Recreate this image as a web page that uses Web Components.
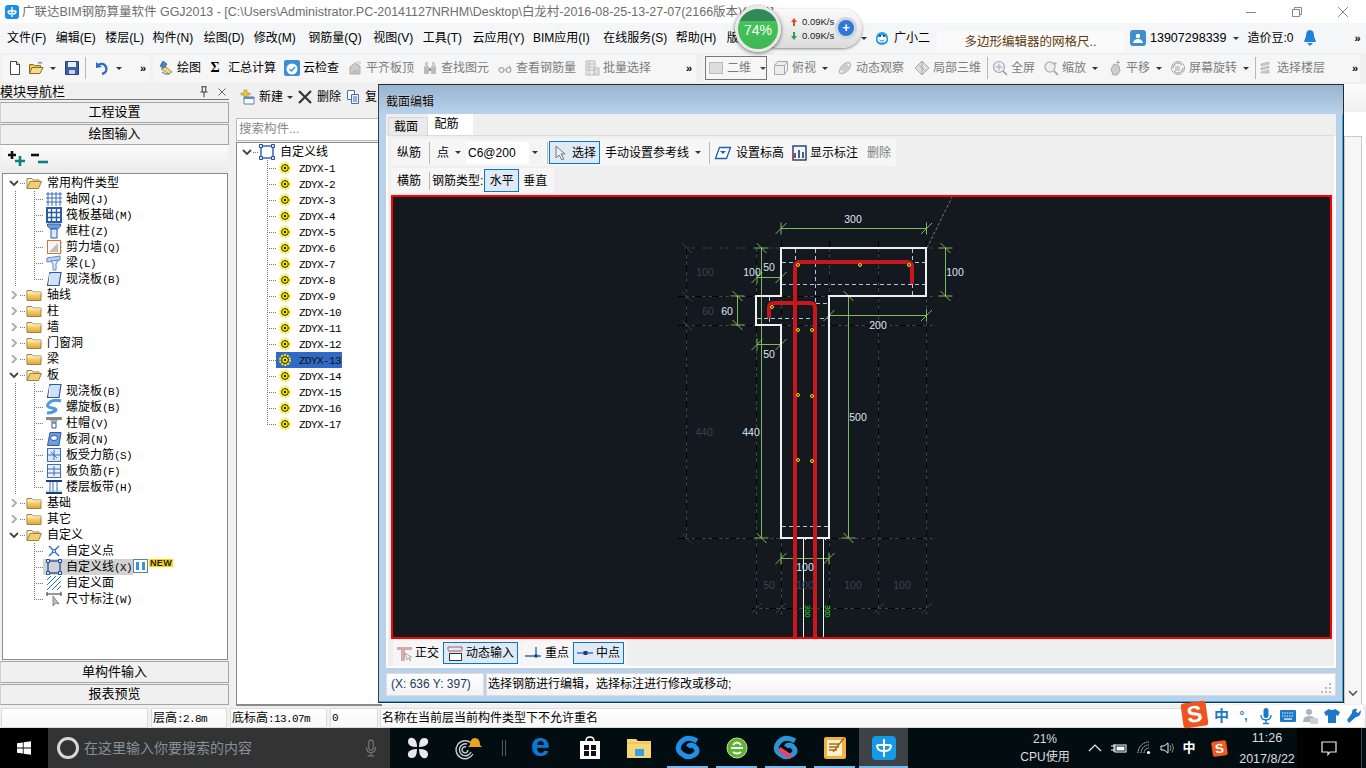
<!DOCTYPE html>
<html lang="zh">
<head>
<meta charset="utf-8">
<title>GGJ2013</title>
<style>
  html, body { margin: 0; height: 100%; }
  body {
    width: 1366px; height: 768px; overflow: hidden; display: flex; flex-direction: column;
    background: #f0f0f0; color: #000; position: relative;
    font: 12px/16px "Liberation Sans", "Noto Sans CJK SC", sans-serif;
  }
</style>
</head>
<body>
<title-bar></title-bar>
<menu-bar></menu-bar>
<main-toolbar></main-toolbar>
<work-area>
  <nav-panel></nav-panel>
  <comp-panel></comp-panel>
  <draw-area></draw-area>
</work-area>
<status-bar></status-bar>
<task-bar></task-bar>
<section-dialog></section-dialog>
<net-widget></net-widget>
<ime-bar></ime-bar>

<script>
// icon set, 16x16 unless noted
const I = {
  new: '<path d="M3.5 1.5h6l3 3v10h-9z" fill="#fff" stroke="#444"/><path d="M9.5 1.5v3h3" fill="#ddd" stroke="#444"/>',
  open: '<path d="M1.5 13.5v-9h4l1 1h6v2" fill="#e8c766" stroke="#8a6d20"/><path d="M1.5 13.5l2.5-6h11l-3 6z" fill="#f6dc8a" stroke="#8a6d20"/><path d="M10 3.5q2-2.5 4 0" fill="none" stroke="#2a62b8"/>',
  save: '<path d="M1.5 1.5h13v13h-13z" fill="#3d5fa8" stroke="#26407a"/><path d="M4 2h8v5H4z" fill="#e8eef8"/><path d="M5 10h6v4H5z" fill="#c7d3e8"/>',
  undo: '<path d="M4 5q6-3 8 2t-4 7" fill="none" stroke="#2a6fc4" stroke-width="2.4"/><path d="M2 2v6l6-1z" fill="#2a6fc4"/>',
  draw: '<path d="M5 1l4 3-3 5-4-3z" fill="#4f7fc9" stroke="#244a86" stroke-width=".6"/><path d="M3 9l8 5 3-2-6-5z" fill="#f1d77c" stroke="#8a6d20" stroke-width=".7"/><path d="M4 12q3 3 7 2" fill="none" stroke="#2a6fc4"/>',
  cloud: '<rect x="0" y="0" width="16" height="16" rx="2" fill="#3a8fd8"/><circle cx="8" cy="9" r="5.5" fill="#fff"/><path d="M5.5 9l2 2 3.5-4" fill="none" stroke="#3a8fd8" stroke-width="1.5"/>',
  align: '<path d="M3 14V7l5-4 5 3v8z" fill="#ccc" stroke="#aaa"/><path d="M6 14v-4h5v4" fill="#bbb"/><path d="M9 1h5v3H9z" fill="#ddd"/>',
  find: '<rect x="2" y="6" width="5" height="8" rx="1" fill="#bbb"/><rect x="9" y="6" width="5" height="8" rx="1" fill="#bbb"/><rect x="3" y="2" width="3" height="5" fill="#ccc"/><rect x="10" y="2" width="3" height="5" fill="#ccc"/><path d="M7 8h2v3H7z" fill="#999"/>',
  glass: '<circle cx="4.5" cy="10" r="2.4" fill="none" stroke="#aaa" stroke-width="1.2"/><circle cx="11.5" cy="10" r="2.4" fill="none" stroke="#aaa" stroke-width="1.2"/><path d="M7 10h2M13.5 8L12 5" stroke="#aaa" fill="none"/>',
  batch: '<path d="M2 1h9v14H2z" fill="#eee" stroke="#bbb"/><path d="M2 4h9M2 7h9M2 10h9M5 1v14M10 8h5v7h-5z" fill="#ddd" stroke="#bbb"/>',
  sq: '<rect x="1.5" y="2.5" width="13" height="11" fill="#ddd" stroke="#bbb"/>',
  cube: '<path d="M1.5 5.5h10v9h-10zM1.5 5.5l3-4h10l-3 4M11.5 14.5l3-4v-9" fill="#eee" stroke="#aaa"/>',
  orbit: '<ellipse cx="8" cy="8" rx="7" ry="3.5" transform="rotate(-45 8 8)" fill="none" stroke="#bbb" stroke-width="1.5"/><circle cx="8" cy="8" r="4" fill="#ccc"/>',
  part: '<path d="M8 1l7 7-7 7-7-7z" fill="#ddd" stroke="#aaa"/><path d="M4 4l8 8M8 1v14" stroke="#aaa"/>',
  full: '<circle cx="7" cy="7" r="5.5" fill="#eef" stroke="#aaa" stroke-width="1.2"/><path d="M7 3.5v7M3.5 7h7" stroke="#aaa"/><path d="M11 11l4 4" stroke="#999" stroke-width="1.6"/>',
  zoom: '<circle cx="7" cy="7" r="5" fill="#eee" stroke="#bbb" stroke-width="1.6"/><path d="M11 11l4 4" stroke="#aaa" stroke-width="1.8"/><path d="M12 2v3M10.5 3.5h3" stroke="#aaa"/>',
  pan: '<path d="M4 9l3-5 5 2 1 5-3 4H6z" fill="#ccc" stroke="#aaa"/><path d="M11 0v5M9 2.5h4" stroke="#aaa"/>',
  rot: '<circle cx="8" cy="8" r="6.5" fill="#f4f4f4" stroke="#aaa"/><path d="M3 8a5 5 0 0 1 9-3M13 8a5 5 0 0 1-9 3" fill="none" stroke="#999"/><rect x="5" y="6" width="5" height="5" fill="#ccc"/>',
  floor: '<path d="M3 4l8-2v2L3 6zM3 8l8-2v2L3 10zM3 12l8-2v3H3z" fill="#ccc" stroke="#aaa" stroke-width=".6"/>',
  add: '<path d="M5 1h3v3h3v2H8v2H5V6H2V4h3z" fill="#e6c94a" stroke="#a88a1d" stroke-width=".6"/><path d="M5 8h10v7H5z" fill="#fff" stroke="#5a7fb0"/><path d="M5 8h10v2H5z" fill="#5a8ac8"/>',
  cross: '<path d="M2 2l12 12M14 2L2 14" stroke="#333" stroke-width="2.2"/>',
  copy: '<path d="M2.5 1.5h7v9h-7z" fill="#fff" stroke="#4672b4"/><path d="M6.5 5.5h7v9h-7z" fill="#e8f0fb" stroke="#4672b4"/><path d="M8 8h4M8 10h4M8 12h4" stroke="#4672b4"/>',
  folder: '<path d="M1 13.5V3.5h5l1.5 1.5h7.5v8.5z" fill="url(#fg)" stroke="#9b8444"/><path d="M1 6h14" stroke="#fff3c4"/><defs><linearGradient id="fg" x1="0" y1="0" x2="0" y2="1"><stop offset="0" stop-color="#fff1b8"/><stop offset="1" stop-color="#e3a524"/></linearGradient></defs>',
  folderOpen: '<path d="M1 13.5V3.5h5l1 1.5h6v2" fill="#f5f0df" stroke="#9b8444"/><path d="M1 13.5l3-7h11.5l-3 7z" fill="#f7cd6f" stroke="#9b8444"/>',
  grid: '<path d="M2 1v14M6 1v14M10 1v14M14 1v14M0 3h16M0 7h16M0 11h16" stroke="#3a6cc0" fill="none"/>',
  raft: '<rect x="1" y="1" width="14" height="14" fill="#fff" stroke="#2b5aa8" stroke-width="2"/><path d="M1 5.5h14M1 10.5h14M5.5 1v14M10.5 1v14" stroke="#2b5aa8" stroke-width="1.4"/>',
  column: '<path d="M1.5 1h13v2l-3 3h-7l-3-3z" fill="#6f9be0" stroke="#2b5aa8"/><path d="M5 6h6v9H5z" fill="#dce8fb" stroke="#2b5aa8"/>',
  wall: '<rect x="1.5" y="1.5" width="13" height="13" fill="#f8f4ee" stroke="#c9763f"/><path d="M3 13l9-9v9z" fill="#bdbdbd"/><path d="M14 4h2M14 8h2M14 12h2" stroke="#c9763f"/>',
  beam: '<path d="M1 3l13-2v4L1 7z" fill="#bcd4f3" stroke="#5a8ac8"/><path d="M5 6l7-1-2 4v6H7V9z" fill="#e1ecfb" stroke="#5a8ac8"/>',
  slab: '<path d="M4 1.5h11l-2 13H1.5z" fill="#cfe0f8" stroke="#2b5aa8" stroke-width="1.2"/><path d="M4 3l-1 10" stroke="#fff"/>',
  spiral: '<path d="M15 2Q7 0 3 4t3 5q6 1 3 3t-8 2" fill="none" stroke="#4d9ae0" stroke-width="3"/>',
  cap: '<path d="M0 2h16v3H0z" fill="#888"/><path d="M4 5h8l-1.5 3h-5z" fill="#aaa"/><path d="M6 8h4v5H6z" fill="#fff" stroke="#2b5aa8"/>',
  hole: '<path d="M4 1.5h11l-2 13H1.5z" fill="#6f9be0" stroke="#2b5aa8"/><ellipse cx="8" cy="7" rx="3.5" ry="2.5" fill="#fff" stroke="#2b5aa8"/>',
  rebarS: '<rect x="1.5" y="1.5" width="13" height="13" fill="#dbe8fa" stroke="#3a6cc0"/><path d="M2 8h12M8 3v10M5 5l6 6" stroke="#3a6cc0" fill="none"/>',
  rebarF: '<rect x="1.5" y="1.5" width="13" height="13" fill="#e8f0fb" stroke="#3a6cc0"/><path d="M2 6h12M2 10h12M8 3v10" stroke="#3a6cc0"/>',
  band: '<path d="M0 2h16M0 14h16" stroke="#1e3f78" stroke-width="2"/><path d="M4 3v10M11 3v10M7 3v10" stroke="#3a6cc0"/><path d="M0 12h16" stroke="#9fc0ea"/>',
  point: '<path d="M3 3l10 10M13 3L3 13" stroke="#2b6bc0" stroke-width="1.4"/><circle cx="8" cy="8" r="1.5" fill="#fff" stroke="#2b6bc0"/>',
  line: '<rect x="2" y="2" width="12" height="12" fill="none" stroke="#1f4fa6" stroke-width="1.3"/><path d="M.5.5h3v3h-3zM12.5.5h3v3h-3zM.5 12.5h3v3h-3zM12.5 12.5h3v3h-3z" fill="#d8e6fa" stroke="#1f4fa6"/>',
  area: '<path d="M1 5l4-4M1 10l9-9M1 15L15 1M6 15l9-9M11 15l4-4" stroke="#2b6bc0" fill="none"/>',
  dim: '<path d="M1 1v4M15 1v4M1 3h14" stroke="#333" fill="none"/><path d="M7 5l0 10 3-3 3 1z" fill="#bbb" stroke="#888"/>',
  gear: '<circle cx="6" cy="8" r="4.8" fill="none" stroke="#ffec00" stroke-width="2.2" stroke-dasharray="2 1"/><circle cx="6" cy="8" r="3.4" fill="#ffec00" stroke="#222"/><circle cx="6" cy="8" r="1.2" fill="#222"/>',
  pin: '<path d="M5 2h6M6 2v6M10 2v6M4 8h8M8 8v6" stroke="#222" fill="none"/>',
  x: '<path d="M4 4l8 8M12 4l-8 8" stroke="#555"/>',
  cursor: '<path d="M3 1l0 12 3-3 3 5 2-1-3-5h4z" fill="#eee" stroke="#777"/>',
  setH: '<path d="M4.5 2.5h11l-4 11H.5z" fill="#fff" stroke="#1e5fae" stroke-width="1.3"/><path d="M5 6h6l-3 3z" fill="#1e5fae"/>',
  show: '<rect x="2" y="1" width="13" height="14" fill="#f4f6f9" stroke="#1b3b6e" stroke-width="1.4"/><path d="M4 13V8M8 13V5M12 13V7" stroke="#1b3b6e" stroke-width="1.6"/><rect x="1" y="10" width="3" height="3" fill="#d33"/>',
  ortho: '<path d="M1 2h15v3H9v11H5V5H1z" fill="#d9a8a8"/><path d="M9 8l2 7 1.5-2 2 3-1-4h2z" fill="#e8eef6" stroke="#888" stroke-width=".6"/>',
  dyn: '<path d="M1 2h14M1 6h14M1 2v3M15 2v3" stroke="#b05a5a" fill="none"/><rect x="2.5" y="8.5" width="12" height="7" fill="#fff" stroke="#333"/>',
  heavy: '<path d="M0 11h16M11 2v9" stroke="#2b6bc0" stroke-width="1.4"/><rect x="9.5" y="9.5" width="3" height="3" fill="#1e3f78"/>',
  mid: '<path d="M0 8h16" stroke="#2b6bc0" stroke-width="1.4"/><rect x="6.5" y="6" width="4" height="4" fill="#1e3f78"/>',
  win: '<path d="M1 3.2l5.8-.8v5.2H1zM7.6 2.3L15 1.2v6.4H7.6zM1 8.4h5.8v5.2L1 12.8zM7.6 8.4H15v6.4l-7.4-1z" fill="#fff"/>',
  mic: '<rect x="6" y="1" width="4" height="9" rx="2" fill="none" stroke="#777"/><path d="M4 7q0 5 4 5t4-5M8 12v3M5 15h6" fill="none" stroke="#777"/>',
  micB: '<rect x="5.5" y="0" width="5" height="10" rx="2.5" fill="#1e78c8"/><path d="M3 7q0 5 5 5t5-5M8 12v3M5 15.5h6" fill="none" stroke="#1e78c8" stroke-width="1.4"/>',
  keys: '<rect x="0" y="2" width="16" height="12" rx="1" fill="#1e78c8"/><path d="M2 5h12M2 8h12" stroke="#fff" stroke-dasharray="1.4 1"/><path d="M4 11h8" stroke="#fff" stroke-width="1.3"/>',
  user: '<circle cx="7" cy="4" r="3" fill="#a9b4c0"/><path d="M1 14q0-6 6-6t5 3v3z" fill="#a9b4c0"/><rect x="8" y="10" width="8" height="6" rx="1" fill="#c8d0d8"/>',
  shirt: '<path d="M5 1L0 4l2 4 2-1v8h8V7l2 1 2-4-5-3q-3 2-6 0z" fill="#1e78c8"/>',
  wrench: '<path d="M15 2l-3 3-2-1 1-3q-5-1-5 4l-5 7 2 3 7-6q5 0 5-7z" fill="#1e78c8"/>',
  wifi: '<path d="M2 13a11 11 0 0 1 11-11M5 13a8 8 0 0 1 8-8M8 13a5 5 0 0 1 5-5" fill="none" stroke="#ccc" stroke-dasharray="1.6 .7"/><circle cx="12.5" cy="12.5" r="1.6" fill="#fff"/>',
  spk: '<path d="M2 6h3l4-3v10L5 10H2z" fill="none" stroke="#eee"/><path d="M11 5q2 3 0 6M13 3.5q3 4.5 0 9" fill="none" stroke="#888"/>',
  bat: '<path d="M0 6h3M3 4v8M0 10h3" stroke="#fff" fill="none"/><rect x="4" y="5" width="11" height="7" fill="none" stroke="#fff"/><rect x="5.5" y="6.5" width="8" height="4" fill="#fff"/>',
  act: '<path d="M1 2h14v10H9l-2 2.5V12H1z" fill="none" stroke="#eee" stroke-width="1.2"/>'
}
const icon = (n, s = 16) => `<svg width="${s}" height="${s}" viewBox="0 0 16 16" style="flex:none;display:block;overflow:visible">${I[n] || ''}</svg>`

class Base extends HTMLElement {
  constructor() {
    super()
    const shadow = this.attachShadow({ mode: 'open' })
    shadow.innerHTML = `<style>${this.css()}</style>${this.html()}`
  }
  css() { return ':host{display:block}' }
  html() { return '<slot></slot>' }
}

class UiIcon extends Base {
  css() { return ':host{display:inline-flex;flex:none}' }
  html() { return icon(this.getAttribute('name'), +(this.getAttribute('size') || 16)) }
}

class ToolBtn extends Base {
  css() { return `
    :host{display:inline-flex;align-items:center;gap:3px;height:22px;white-space:nowrap;flex:none;box-sizing:border-box}
    :host([off]){color:#7d7d7d}
    :host([boxed]){border:1px solid #0078d7;background:#dfeaf6;padding:0 3px}
    .arrow{width:0;height:0;border-top:3px solid #333;border-left:3px solid transparent;border-right:3px solid transparent;margin-left:3px}
  ` }
  html() {
    const ic = this.getAttribute('icon')
    return `${ic ? icon(ic) : ''}<slot></slot>${this.hasAttribute('arrow') ? '<i class="arrow"></i>' : ''}`
  }
}

class BarSep extends Base {
  css() { return ':host{display:block;width:1px;height:22px;background:#b8b8b8;flex:none}' }
}

class TitleBar extends Base {
  css() { return `
    :host{display:flex;align-items:center;height:23px;background:#fff;color:#707070;font-size:12.5px;white-space:nowrap;overflow:hidden;flex:none}
    .logo{width:14px;height:14px;border-radius:3px;background:#1e8fe8;margin:0 4px 0 5px;flex:none;display:flex;align-items:center;justify-content:center}
    .t{width:1270px;overflow:hidden;color:#6e6e6e;margin-left:-1px;letter-spacing:-.02px}
    .w{display:flex;position:absolute;right:0;top:0}
    .w span{width:46px;height:23px;display:flex;align-items:center;justify-content:center}
  ` }
  html() { return `
    <div class="logo"><svg width="12" height="12" viewBox="0 0 12 12"><path d="M6 1v10M2 5h8M2 5q0 3 3 3M10 5q0 3-3 3" fill="none" stroke="#fff" stroke-width="1.4"/></svg></div>
    <div class="t">广联达BIM钢筋算量软件 GGJ2013 - [C:\\Users\\Administrator.PC-20141127NRHM\\Desktop\\白龙村-2016-08-25-13-27-07(2166版本)(v12)]</div>
    <div class="w">
      <span><svg width="12" height="12"><path d="M1 6.5h10" stroke="#888"/></svg></span>
      <span><svg width="12" height="12"><path d="M1.5 3.5h7v7h-7zM3.5 3.5v-2h7v7h-2" fill="none" stroke="#888"/></svg></span>
      <span><svg width="12" height="12"><path d="M1 1l10 10M11 1L1 11" stroke="#888"/></svg></span>
    </div>` }
}

class MenuBar extends Base {
  css() { return `
    :host{display:flex;align-items:center;height:30px;background:#f5f6f7;white-space:nowrap;flex:none;overflow:hidden}
    .l{display:flex;gap:9.5px;padding-left:7px;width:857px;box-sizing:border-box;overflow:hidden;flex:none}
    .r{display:flex;align-items:center;height:100%}
    .arr{width:0;height:0;border-top:3px solid #333;border-left:3px solid transparent;border-right:3px solid transparent}
    .note{width:187px;height:22px;margin-top:8px;background:#fafafa;border-radius:3px 3px 0 0;color:#5c3a0c;display:flex;align-items:center;justify-content:center;font-size:12.5px;flex:none}
    .av{width:16px;height:16px;background:#3f8fd0;border-radius:3px;display:flex;align-items:center;justify-content:center;flex:none}
  ` }
  html() {
    const m = [['文件(F)', 0], ['编辑(E)', 0], ['楼层(L)', 0], ['构件(N)', -1], ['绘图(D)', 1], ['修改(M)', 0], ['钢筋量(Q)', 3], ['视图(V)', 2], ['工具(T)', 0], ['云应用(Y)', 1], ['BIM应用(I)', -1], ['在线服务(S)', 4], ['帮助(H)', -1], ['版', 1]]
    return `<div class="l">${m.map(([x, n]) => `<span style="margin-left:${n}px">${x}</span>`).join('')}</div>
    <div class="r">
      <i class="arr" style="margin:0 6px 0 4px"></i>
      <svg width="18" height="18" viewBox="0 0 18 18" style="flex:none"><path d="M3 9a6 6 0 0 1 12 0q1 6-6 7-7-1-6-7z" fill="#2a9be8"/><ellipse cx="9" cy="10" rx="4.5" ry="3.5" fill="#fff"/><circle cx="7" cy="7" r="1" fill="#123"/><circle cx="11" cy="7" r="1" fill="#123"/><path d="M6.5 11q2.5 2 5 0" stroke="#2a9be8" fill="none"/></svg>
      <span style="margin:0 7px 0 3px">广小二</span>
      <div class="note">多边形编辑器的网格尺..</div>
      <div class="av" style="margin-left:6px"><svg width="12" height="12" viewBox="0 0 12 12"><circle cx="6" cy="4" r="2.2" fill="#fff"/><path d="M1 11q1-4 5-4t5 4z" fill="#fff"/></svg></div>
      <span style="margin-left:4px;font-size:12.5px">13907298339</span>
      <i class="arr" style="margin:0 9px 0 6px"></i>
      <span>造价豆:0</span>
      <svg width="14" height="18" viewBox="0 0 14 18" style="margin-left:9px;flex:none"><path d="M7 1q4 0 4 6l2 6H1l2-6q0-6 4-6z" fill="#1f80e0"/><path d="M4 14h6l-3 3z" fill="#1f80e0"/></svg>
      <span style="margin-left:38px;font:bold 11px 'Liberation Sans'">»</span>
    </div>` }
}

class MainToolbar extends Base {
  css() { return `
    :host{display:flex;align-items:center;height:30px;background:#f0f0f0;white-space:nowrap;flex:none;overflow:hidden}
    .g{display:flex;align-items:center;height:27px;background:#f6f6f6;border-radius:3px;flex:none;box-sizing:border-box}
    .a{width:148px;margin-left:2px;padding-left:5px}
    .b{width:543px;margin-left:3px;padding-left:5px;gap:8px}
    .c{width:657px;margin-left:7px;padding-left:2px;gap:6px}
    .more{font:bold 11px "Liberation Sans";margin-left:auto;margin-right:4px}
    .sigma{font:bold 14px "Liberation Serif";width:12px;text-align:center}
    .combo{width:62px;height:24px;border:1px solid #777;display:flex;align-items:center;gap:3px;padding-left:2px;box-sizing:border-box;color:#7d7d7d}
    .arr{width:0;height:0;border-top:3px solid #444;border-left:3px solid transparent;border-right:3px solid transparent}
  ` }
  html() { return `
    <div class="g a">
      <ui-icon name="new"></ui-icon>
      <tool-btn icon="open" arrow style="margin-left:5px"></tool-btn>
      <ui-icon name="save" style="margin-left:8px"></ui-icon>
      <bar-sep style="margin-left:5px"></bar-sep>
      <tool-btn icon="undo" arrow style="margin-left:8px"></tool-btn>
      <span class="more">»</span>
    </div>
    <div class="g b">
      <tool-btn icon="draw">绘图</tool-btn>
      <span style="display:flex;gap:7px;align-items:center"><span class="sigma">Σ</span>汇总计算</span>
      <tool-btn icon="cloud">云检查</tool-btn>
      <tool-btn icon="align" off>平齐板顶</tool-btn>
      <tool-btn icon="find" off>查找图元</tool-btn>
      <tool-btn icon="glass" off>查看钢筋量</tool-btn>
      <tool-btn icon="batch" off>批量选择</tool-btn>
      <span class="more">»</span>
    </div>
    <div class="g c">
      <div class="combo">${icon('sq')}<span>二维</span><i class="arr" style="margin-left:6px"></i></div>
      <tool-btn icon="cube" arrow off>俯视</tool-btn>
      <tool-btn icon="orbit" off style="margin-left:3px">动态观察</tool-btn>
      <tool-btn icon="part" off style="margin-left:4px">局部三维</tool-btn>
      <bar-sep></bar-sep>
      <tool-btn icon="full" off style="margin-left:-2px">全屏</tool-btn>
      <tool-btn icon="zoom" arrow off style="margin-left:2px">缩放</tool-btn>
      <tool-btn icon="pan" arrow off style="margin-left:3px">平移</tool-btn>
      <tool-btn icon="rot" arrow off style="margin-left:2px">屏幕旋转</tool-btn>
      <bar-sep></bar-sep>
      <tool-btn icon="floor" off style="margin-left:-4px">选择楼层</tool-btn>
      <span class="more" style="margin-right:2px">»</span>
    </div>` }
}

class WorkArea extends Base {
  css() { return ':host{display:flex;height:625px;background:#f0f0f0;flex:none;overflow:hidden}' }
}

class PanelBtn extends Base {
  css() { return `:host{display:block;height:21px;line-height:18px;text-align:center;background:#f0f0f0;border:1px solid #a5a5a5;border-left-color:#d0d0d0;box-sizing:border-box;font-size:13px;flex:none}` }
}

class TreeNode extends Base {
  css() { return `
    :host{display:flex;height:16px;line-height:16px;white-space:nowrap;padding-left:var(--pad,5px)}
    .chev{width:12px;height:16px;display:flex;align-items:center;justify-content:center;flex:none}
    .stub{width:6px;height:16px;flex:none;background:repeating-linear-gradient(90deg,#777 0 1px,transparent 1px 2px) 0 8px/100% 1px no-repeat}
    .out{width:26px;height:16px;flex:none}
    .out.c{background:repeating-linear-gradient(#777 0 1px,transparent 1px 2px) 7px 0/1px 100% no-repeat}
    .t{width:9px;height:16px;flex:none;background:repeating-linear-gradient(#777 0 1px,transparent 1px 2px) 0 0/1px 100% no-repeat,repeating-linear-gradient(90deg,#777 0 1px,transparent 1px 2px) 0 8px/100% 1px no-repeat}
    .t.l{background:repeating-linear-gradient(#777 0 1px,transparent 1px 2px) 0 0/1px 9px no-repeat,repeating-linear-gradient(90deg,#777 0 1px,transparent 1px 2px) 0 8px/100% 1px no-repeat}
    .item{display:flex;align-items:center;height:16px;gap:5px}
    .lv1{padding-left:3px;gap:4px;padding-right:1px}
    :host([sel]) .item{background:#316ac5;color:#fff}
    :host([hover]) .item{background:#d2d2d2}
    .m{font:11px/16px "Liberation Mono",monospace;letter-spacing:-.6px}
    :host([sel]) .m{color:#111}
    .new{display:flex;align-items:flex-start;gap:1px}
    .bd{font:bold 9px/8px "Liberation Sans";background:#ffd800;color:#222;padding:0 1px;letter-spacing:.3px}
  ` }
  html() {
    const g = n => this.getAttribute(n) || ''
    const lv = +g('level')
    const open = this.hasAttribute('open')
    const chev = `<svg width="10" height="8" viewBox="0 0 10 8"><path d="${open ? 'M1 2l4 4 4-4' : 'M3 0l4 4-4 4'}" fill="none" stroke="${open ? '#444' : '#aaa'}" stroke-width="1.8"/></svg>`
    const tail = this.hasAttribute('new') ? `<span class="new"><svg width="15" height="14" viewBox="0 0 15 14" style="flex:none"><rect x=".5" y=".5" width="14" height="13" fill="#fff" stroke="#5a7fb0"/><path d="M3 3h3v8H3zM9 3h3v8H9z" fill="#3d8fe0"/></svg><span class="bd">NEW</span></span>` : ''
    if (lv === 0) {
      return `<span class="chev">${chev}</span><span class="stub"></span><span class="item">${icon(g('icon'))}<span>${g('label')}</span></span>`
    }
    const out = `<span class="out ${this.hasAttribute('cont') ? 'c' : ''}"></span><span class="t ${this.hasAttribute('last') ? 'l' : ''}"></span>`
    return `${out}<span class="item lv1">${icon(g('icon'))}<span>${g('label')}<span class="m">${g('key')}</span></span></span>${tail}`
  }
}

class NavPanel extends Base {
  css() { return `
    :host{display:flex;flex-direction:column;width:229px;height:621px;flex:none;margin-top:1px;box-sizing:border-box}
    .h{height:15px;line-height:14px;display:flex;align-items:center;border-bottom:1px solid #777;background:#f0f0f0;font-size:13px;margin-bottom:2px;flex:none}
    .h span{flex:1}
    .tools{height:28px;display:flex;align-items:center;gap:6px;padding-left:7px;margin:0 1px;background:linear-gradient(#fafafa,#ececec);flex:none}
    .tree{flex:1;margin:0 1px 0 2px;background:#fff;border:1px solid #8a8a8a;padding-top:1px;overflow:hidden;--pad:5px}
  ` }
  html() {
    const kids = (a, cont = true) => a.map(([ic, l, k, x], i) => `<tree-node level="1" ${cont ? 'cont' : ''} ${i === a.length - 1 ? 'last' : ''} icon="${ic}" label="${l}" key="${k}" ${x || ''}></tree-node>`).join('')
    const root = (l, o) => `<tree-node level="0" icon="${o ? 'folderOpen' : 'folder'}" label="${l}" ${o ? 'open' : ''}></tree-node>`
    return `
    <div class="h"><span>模块导航栏</span>${icon('pin', 14)}<span style="flex:none;width:4px"></span>${icon('x', 14)}</div>
    <panel-btn>工程设置</panel-btn>
    <panel-btn style="margin-top:1px">绘图输入</panel-btn>
    <div class="tools">
      <svg width="17" height="16" viewBox="0 0 17 16"><path d="M4 0v8M0 4h8" stroke="#111" stroke-width="2.6"/><path d="M12 5v10M7 10h10" stroke="#0d7f7f" stroke-width="2.6"/></svg>
      <svg width="17" height="16" viewBox="0 0 17 16"><path d="M0 4h8" stroke="#111" stroke-width="2.6"/><path d="M7 11h10" stroke="#0d7f7f" stroke-width="2.6"/></svg>
    </div>
    <div class="tree">
      ${root('常用构件类型', 1)}
      ${kids([['grid', '轴网', '(J)'], ['raft', '筏板基础', '(M)'], ['column', '框柱', '(Z)'], ['wall', '剪力墙', '(Q)'], ['beam', '梁', '(L)'], ['slab', '现浇板', '(B)']])}
      ${root('轴线')}${root('柱')}${root('墙')}${root('门窗洞')}${root('梁')}
      ${root('板', 1)}
      ${kids([['slab', '现浇板', '(B)'], ['spiral', '螺旋板', '(B)'], ['cap', '柱帽', '(V)'], ['hole', '板洞', '(N)'], ['rebarS', '板受力筋', '(S)'], ['rebarF', '板负筋', '(F)'], ['band', '楼层板带', '(H)']])}
      ${root('基础')}${root('其它')}
      ${root('自定义', 1)}
      ${kids([['point', '自定义点', ''], ['line', '自定义线', '(X)', 'hover new'], ['area', '自定义面', ''], ['dim', '尺寸标注', '(W)']], false)}
    </div>
    <panel-btn style="margin-top:1px;height:22px;line-height:20px">单构件输入</panel-btn>
    <panel-btn style="margin-top:1px">报表预览</panel-btn>` }
}

class CompPanel extends Base {
  css() { return `
    :host{display:flex;flex-direction:column;width:146px;margin-left:7px;height:623px;flex:none;box-sizing:border-box}
    .bar{height:28px;display:flex;align-items:center;gap:4px;margin-left:3px;white-space:nowrap;flex:none}
    .s{height:23px;margin:7px 0 1px;border:1px solid #bbb;background:#fff;color:#888;line-height:21px;padding-left:2px;font-size:12.5px;flex:none;box-sizing:border-box}
    .tree{flex:1;background:#fff;border:1px solid #8a8a8a;border-width:1px 0 2px 1px;padding-top:1px;--pad:4px;overflow:hidden}
  ` }
  html() {
    const rows = Array.from({ length: 17 }, (_, i) => `<tree-node level="1" icon="gear" key="ZDYX-${i + 1}" ${i === 12 ? 'sel' : ''} ${i === 16 ? 'last' : ''}></tree-node>`).join('')
    return `<div class="bar">
        ${icon('add')}<span>新建</span><i style="width:0;height:0;border-top:3px solid #333;border-left:3px solid transparent;border-right:3px solid transparent"></i>
        ${icon('cross')}<span>删除</span>${icon('copy')}<span>复</span>
      </div>
      <div class="s">搜索构件...</div>
      <div class="tree"><tree-node level="0" open icon="line" label="自定义线"></tree-node>${rows}</div>` }
}

class DrawArea extends Base {
  css() { return `
    :host{display:block;flex:1;background:#fff;margin-top:1px;height:620px;position:relative}
    .top{height:28px;background:linear-gradient(#fcfcfc,#f0f0f0)}
    .b{position:absolute;right:4px;top:52px;bottom:0;width:18px;background:#f6f6f6;border:1px solid #ccc;border-bottom:0;box-sizing:border-box}
    svg{position:absolute;left:2px;bottom:6px}
  ` }
  html() { return '<div class="top"></div><div class="b"><svg width="12" height="8"><path d="M2 1l4 4 4-4" fill="none" stroke="#555" stroke-width="1.6"/></svg></div>' }
}

class StatusBar extends Base {
  css() { return `
    :host{display:flex;height:20px;flex:none;background:#f0f0f0;gap:3px;white-space:nowrap;padding:0 0 0 1px}
    div{background:linear-gradient(#fff,#f7f7f7);border:1px solid #dcdcdc;box-sizing:border-box;height:20px;line-height:19px;padding-left:1px;flex:none;overflow:hidden}
    .m{font:11px/19px "Liberation Mono",monospace;letter-spacing:-.6px}
  ` }
  html() { return `
    <div style="width:147px"></div>
    <div style="width:76px">层高<span class="m">:2.8m</span></div>
    <div style="width:97px">底标高<span class="m">:13.07m</span></div>
    <div style="width:48px" class="m">0</div>
    <div style="flex:1;margin-left:-1px">名称在当前层当前构件类型下不允许重名</div>` }
}

class TaskBar extends Base {
  css() { return `
    :host{display:flex;align-items:stretch;height:40px;background:#020d12;color:#e6e6e6;flex:none;white-space:nowrap}
    .st{width:48px;background:#000;display:flex;align-items:center;justify-content:center;flex:none}
    .se{width:342px;background:#333;display:flex;align-items:center;flex:none;font-size:14px;color:#84909c}
    .cort{width:22px;height:22px;border:3px solid #d8d8d8;border-radius:50%;margin:0 5px 0 9px;flex:none;box-sizing:border-box}
    .ic{width:49px;position:relative;display:flex;align-items:center;justify-content:center;flex:none;margin:0}
    .ic.u::after{content:"";position:absolute;left:4px;right:4px;bottom:0;height:2px;background:#76b9ed}
    .ic.a{background:#3c4245}
    .ic.a::after{left:0;right:0}
    .div{width:25px;flex:none;display:flex;align-items:center;justify-content:center}
    .cpu{margin-left:auto;width:60px;text-align:center;line-height:18px;padding-top:2px;flex:none;color:#ddd}
    .tr{display:flex;align-items:center;justify-content:center;flex:none}
    .clock{line-height:21px;text-align:center;flex:none;color:#ddd;font-size:12.5px;width:60px}
    .ac{width:65px;background:#000;display:flex;align-items:center;justify-content:center;flex:none;border-right:1px solid #444;box-sizing:border-box}
    .e{font:bold 34px/34px "Liberation Sans";color:#0a78d4;margin-top:-9px}
    .sg{font:bold 13px/15px "Liberation Sans";background:#ef5a1f;color:#fff;width:15px;height:15px;text-align:center;border-radius:2px;transform:rotate(-8deg)}
  ` }
  html() {
    const swirl = (c, c2) => `<svg width="26" height="26" viewBox="0 0 26 26"><path d="M22 6Q12 0 6 7T7 19q6 5 12 1t0-9q-4-2-6 1" fill="none" stroke="${c}" stroke-width="5"/>${c2 ? `<path d="M6 14l12 8" stroke="${c2}" stroke-width="5"/>` : ''}</svg>`
    return `
    <div class="st">${icon('win', 16)}</div>
    <div class="se"><span class="cort"></span>在这里输入你要搜索的内容<span style="margin-left:auto;margin-right:10px;display:flex">${icon('mic', 18)}</span></div>
    <div style="width:3px;flex:none"></div>
    <div class="ic"><svg width="24" height="24" viewBox="0 0 24 24"><g fill="#e8e8e8"><path d="M11 11Q2 11 2 6t5-4q4 2 4 9z"/><path d="M13 11Q13 2 18 2t4 5q-2 4-9 4z"/><path d="M13 13q9 0 9 5t-5 4q-4-2-4-9z"/><path d="M11 13q0 9-5 9t-4-5q2-4 9-4z"/></g></svg></div>
    <div class="ic"><svg width="30" height="28" viewBox="0 0 30 28"><path d="M19 9A9 9 0 1 0 21 20M15 10a6 6 0 1 0 4 8M14 13a3 3 0 1 0 2 3" fill="none" stroke="#ccc" stroke-width="1.4"/><path d="M18 11q0-7 5-7t5 7l2 2H16z" fill="#e8a21c"/></svg></div>
    <div class="div"><svg width="4" height="16"><path d="M.5 0v16M3.5 0v16" stroke="#555"/></svg></div>
    <div class="ic"><span class="e">e</span></div>
    <div class="ic"><svg width="22" height="26" viewBox="0 0 22 26"><path d="M1 6h20v18H1z" fill="#fff"/><path d="M7 6q0-4 4-4t4 4" fill="none" stroke="#fff" stroke-width="1.5"/><path d="M5 10h5v5H5zM12 10h5v5h-5zM5 16h5v5H5zM12 16h5v5h-5z" fill="#111"/></svg></div>
    <div class="ic"><svg width="24" height="22" viewBox="0 0 24 22"><path d="M0 2h9l2 2h13v17H0z" fill="#f7d774"/><path d="M0 6h24" stroke="#e3b94a"/><rect x="8" y="12" width="9" height="7" fill="#38a0e8"/></svg></div>
    <div class="ic u">${swirl('#1f8fe8')}</div>
    <div class="ic u"><svg width="24" height="24" viewBox="0 0 24 24"><circle cx="12" cy="12" r="10" fill="#5cb531" stroke="#b9e69a"/><path d="M6 12h12M8 9q4-5 8 0M8 16q4 3 8 0" stroke="#fff" stroke-width="2" fill="none"/></svg></div>
    <div class="ic u">${swirl('#2a95d8', '#e0476a')}</div>
    <div class="ic u"><svg width="24" height="24" viewBox="0 0 24 24"><rect x="1" y="1" width="22" height="22" rx="2" fill="#f3b13e"/><rect x="4" y="4" width="15" height="16" fill="#fdf1cf"/><path d="M6 8h10M6 11h10M6 14h8M21 2L10 16" stroke="#a86a18" stroke-width="1.3"/></svg></div>
    <div class="ic u a"><svg width="24" height="24" viewBox="0 0 24 24"><rect width="24" height="24" rx="4" fill="#169ae8"/><path d="M12 3v18M5 9h14M5 9q0 6 6 6M19 9q0 6-6 6" fill="none" stroke="#fff" stroke-width="2"/></svg></div>
    <div class="cpu">21%<br>CPU使用</div>
    <div class="tr" style="width:24px;margin-left:8px"><svg width="14" height="8"><path d="M1 7l6-6 6 6" fill="none" stroke="#eee" stroke-width="1.2"/></svg></div>
    <div class="tr" style="width:24px">${icon('bat')}</div>
    <div class="tr" style="width:26px">${icon('wifi')}</div>
    <div class="tr" style="width:20px">${icon('spk')}</div>
    <div class="tr" style="width:24px;color:#fff;font-size:13px;font-weight:bold">中</div>
    <div class="tr" style="width:36px"><span class="sg">S</span></div>
    <div class="clock">11:26<br>2017/8/22</div>
    <div class="ac">${icon('act')}</div>
    <div style="width:4px;flex:none"></div>` }
}

class SectionDialog extends Base {
  css() { return `
    :host{position:absolute;left:378px;top:84px;width:966px;height:619px;display:flex;flex-direction:column;box-sizing:border-box;border:1px solid #252a30;border-left-color:#3a4048;background:#b9d1ea;padding:0 7px 6px 7px;box-shadow:inset -1px -1px 0 #29b6e8}
    .cap{height:29px;margin:0 -7px;padding:5px 7px 0;box-sizing:border-box;background:linear-gradient(#99b4d1,#b9d1ea);line-height:24px;flex:none;text-shadow:0 0 1px #fff}
    .tabs{height:21px;display:flex;align-items:flex-end;background:#efefef;flex:none;padding-left:2px}
    .tab{height:18px;width:40px;line-height:18px;text-align:center;background:#eaeaea;border:1px solid #d8d8d8;border-bottom:0;box-sizing:border-box;padding-right:4px}
    .tab.on{height:21px;width:45px;line-height:21px;background:#fff;border:0;padding-right:8px}
    .body{flex:1;background:#efefef;border:2px solid #fff;border-top:1px solid #dcdcdc;display:flex;flex-direction:column;padding:3px 3px 0 3px;min-height:0}
    .row{display:flex;align-items:center;background:#f6f6f6;height:27px;gap:5px;padding:0 5px;box-sizing:border-box;width:max-content;white-space:nowrap;flex:none;border-radius:2px}
    .combo{width:75px;height:22px;background:#fff;display:flex;align-items:center;padding-left:2px;box-sizing:border-box;position:relative}
    .combo i{position:absolute;right:0;top:0;bottom:0;width:12px;background:#f3f3f3;display:flex;align-items:center;justify-content:center}
    .arr{width:0;height:0;border-top:3px solid #333;border-left:3px solid transparent;border-right:3px solid transparent;flex:none}
    cad-canvas{margin:2px 0 0 0}
    .foot{display:flex;gap:1px;height:27px;align-items:center;padding-left:2px;flex:none}
    .foot .g{display:flex;align-items:center;gap:4px;height:27px;background:#f6f6f6;padding:0 3px;box-sizing:border-box}
    .st{display:flex;gap:2px;height:23px;margin-top:5px;flex:none}
    .st div{background:linear-gradient(#fff,#f3f3f3);border:1px solid #dcdcdc;box-sizing:border-box;line-height:21px;padding-left:4px}
    .grip{position:absolute;right:3px;bottom:1px}
  ` }
  html() { return `
    <div class="cap">截面编辑</div>
    <div class="tabs"><div class="tab">截面</div><div class="tab on">配筋</div></div>
    <div class="body">
      <div class="row">
        <span style="margin-left:1px">纵筋</span><bar-sep style="margin:0 2px 0 3px"></bar-sep>
        <tool-btn arrow>点</tool-btn>
        <div class="combo">C6@200<i><b class="arr"></b></i></div>
        <bar-sep style="margin:0 -4px 0 1px"></bar-sep>
        <tool-btn icon="cursor" boxed style="width:51px;height:23px">选择</tool-btn>
        <tool-btn arrow>手动设置参考线</tool-btn>
        <bar-sep style="margin:0 0 0 3px"></bar-sep>
        <tool-btn icon="setH" style="gap:5px">设置标高</tool-btn>
        <tool-btn icon="show" style="margin-left:2px">显示标注</tool-btn>
        <tool-btn off style="margin-left:4px">删除</tool-btn>
      </div>
      <div class="row" style="margin-top:2px;height:25px">
        <span style="margin-left:1px">横筋</span><bar-sep style="margin:0 -3px 0 3px;height:18px"></bar-sep>
        <span style="margin-right:-4px">钢筋类型:</span>
        <tool-btn boxed style="width:35px;justify-content:center;height:23px">水平</tool-btn>
        <span style="margin-right:2px;margin-left:-1px">垂直</span>
      </div>
      <cad-canvas></cad-canvas>
      <div class="foot">
        <div class="g">
          <tool-btn icon="ortho">正交</tool-btn>
          <tool-btn icon="dyn" boxed>动态输入</tool-btn>
        </div>
        <div class="g">
          <tool-btn icon="heavy" style="gap:4px">重点</tool-btn>
          <tool-btn icon="mid" boxed style="gap:3px">中点</tool-btn>
        </div>
      </div>
    </div>
    <div class="st">
      <div style="width:98px;color:#223a5c">(X: 636 Y: 397)</div>
      <div style="flex:1;padding-left:1px;position:relative">选择钢筋进行编辑，选择标注进行修改或移动;
        <svg class="grip" width="12" height="12"><g fill="#bbb"><rect x="9" y="1" width="2" height="2"/><rect x="5" y="5" width="2" height="2"/><rect x="9" y="5" width="2" height="2"/><rect x="1" y="9" width="2" height="2"/><rect x="5" y="9" width="2" height="2"/><rect x="9" y="9" width="2" height="2"/></g></svg>
      </div>
    </div>` }
}

class CadCanvas extends Base {
  css() { return ':host{display:block;width:941px;height:444px;flex:none;box-sizing:border-box;border:2px solid #f00;background:#14181f}svg{display:block}text{font:10.5px "Liberation Sans",sans-serif}' }
  html() {
    const green = '#7cb85c'
    let s = ''
    const ln = (x1, y1, x2, y2, c, w = 1, extra = '') => { s += `<line x1="${x1}" y1="${y1}" x2="${x2}" y2="${y2}" stroke="${c}" stroke-width="${w}" ${extra}/>` }
    const gray = (x1, y1, x2, y2) => {
      ln(x1, y1, x2, y2, '#3a404a')
      ln(x1, y1, x2, y2, '#000', 1, 'stroke-dasharray="7 4 2 4"')
    }
    const txt = (x, y, t, c = '#dce6f4') => { s += `<text x="${x}" y="${y}" text-anchor="middle" fill="${c}">${t}</text>` }

    // grid lines behind the section
    ;[248, 296.5, 325.5, 538.5].forEach(y => gray(678, y, 933, y))
    ;[[686.5, 248, 538], [756.5, 241, 617], [781.5, 241, 617], [829.5, 241, 617], [878.5, 241, 617], [926.5, 241, 617]].forEach(([x, a, b]) => gray(x, a, x, b))
    gray(752, 608.5, 930, 608.5)
    ;[[687, 248], [687, 296.5], [687, 325.5], [687, 538.5]].forEach(([x, y]) => ln(x - 5, y - 5, x + 5, y + 5, '#3a404a'))
    ;[757, 781, 879, 927].forEach(x => ln(x - 5, 613, x + 5, 603, '#3a404a'))
    s += `<path d="M927 248L952 197" stroke="#777" stroke-dasharray="3 2" fill="none"/>`

    // dimension lines
    const dimH = (y, x1, x2) => {
      ln(x1, y, x2, y, green)
      ;[x1, x2].forEach(x => { ln(x, y - 6, x, y + 6, green); ln(x - 5.5, y + 5.5, x + 5.5, y - 5.5, green) })
    }
    const dimV = (x, y1, y2) => {
      ln(x, y1, x, y2, green)
      ;[y1, y2].forEach(y => { ln(x - 7, y, x + 7, y, green); ln(x - 5, y - 5, x + 5, y + 5, green) })
    }
    dimH(228.5, 781, 926.5)
    dimH(277.5, 757, 781)
    dimH(344.5, 757, 781)
    dimH(315.5, 829, 926.5)
    dimH(558.5, 781, 829)
    dimV(761.5, 248, 538)
    dimV(945.5, 248, 296)
    dimV(737.5, 296, 325)
    dimV(848.5, 296, 538)

    // thin verticals under the section
    ln(803.5, 539, 803.5, 639, '#f2f2f2')
    ln(823.5, 539, 823.5, 639, '#f2f2f2')
    ;[805, 825].forEach(x => { s += `<rect x="${x}" y="539" width="1" height="1" fill="#fff"/>` })

    // section outline
    s += `<path d="M781 248H926V296H829V538H781V325H756V296H781Z" fill="none" stroke="#f0f0f0" stroke-width="2"/>`

    // reference dashes
    const dash = (x1, y1, x2, y2) => ln(x1, y1, x2, y2, '#a9c8ee', 1, 'stroke-dasharray="4 3"')
    dash(782, 262.5, 925, 262.5)
    dash(782, 284.5, 925, 284.5)
    dash(795.5, 249, 795.5, 262)
    dash(815.5, 249, 815.5, 303)
    dash(912.5, 249, 912.5, 296)
    dash(816, 303.5, 829, 303.5)
    dash(757, 318.5, 829, 318.5)
    dash(769.5, 297, 769.5, 325)
    dash(782, 526.5, 828, 526.5)

    // rebars
    const bar = 'fill="none" stroke="#c8161d" stroke-width="4"'
    s += `<path d="M795 639V267Q795 262 800 262H907Q912 262 912 267V284" ${bar}/>`
    s += `<path d="M769 318V308Q769 303 774 303H810Q815 303 815 308V639" ${bar}/>`
    ;[[798, 265], [860, 265], [909, 265], [772, 307], [798, 330], [812, 330], [798, 395], [812, 396], [798, 460], [812, 461]].forEach(([x, y]) => {
      s += `<circle cx="${x}" cy="${y}" r="1.5" fill="#3a3410" stroke="#f5d21a"/>`
    })

    // labels
    txt(853, 223, '300'); txt(769, 271, '50'); txt(752, 276, '100'); txt(955, 276, '100')
    txt(727, 315, '60'); txt(878, 329, '200'); txt(769, 358, '50'); txt(858, 421, '500')
    txt(751, 436, '440'); txt(805, 571, '100')
    const d = '#3d434d'
    txt(705, 276, '100', d); txt(708, 315, '60', d); txt(704, 436, '440', d)
    txt(769, 589, '50', d); txt(805, 589, '100', d); txt(853, 589, '100', d); txt(902, 589, '100', d)
    ;[804.5, 824.5].forEach(x => { s += `<text transform="translate(${x} 605) rotate(90)" fill="#18e018" style="font-size:7.5px">300</text>` })
    return `<svg width="937" height="440" viewBox="393 197 937 440">${s}</svg>`
  }
}

class NetWidget extends Base {
  css() { return `
    :host{position:absolute;left:735px;top:6px;width:127px;height:46px}
    .pill{position:absolute;left:24px;top:3px;width:103px;height:39px;border-radius:20px;background:linear-gradient(#fafafa,#dcdcdc);box-shadow:0 1px 3px #0007}
    .c{position:absolute;left:0;top:0;width:46px;height:46px;border-radius:50%;box-sizing:border-box;border:3px solid #e9e9e9;background:linear-gradient(#2f8a55 0,#2f8a55 30%,#44c457 31%,#3fb858);box-shadow:0 1px 4px #0009;color:#fff;font-size:14px;line-height:42px;text-align:center}
    .r{position:absolute;left:56px;font:9.5px/12px "Liberation Sans";color:#222;white-space:nowrap;display:flex;gap:5px;align-items:center}
    .p{position:absolute;left:103px;top:14px;width:16px;height:16px;border-radius:50%;background:#2f77d8;box-shadow:0 0 0 3px #cfd6dc;color:#fff;font:bold 13px/15px "Liberation Sans";text-align:center}
  ` }
  html() { return `
    <div class="pill"></div>
    <div class="c">74%</div>
    <div class="r" style="top:10px"><svg width="6" height="8"><path d="M3 0l3 4H4v4H2V4H0z" fill="#d9502f"/></svg>0.09K/s</div>
    <div class="r" style="top:24px"><svg width="6" height="8"><path d="M3 8L0 4h2V0h2v4h2z" fill="#2f9e4f"/></svg>0.09K/s</div>
    <div class="p">+</div>` }
}

class ImeBar extends Base {
  css() { return `
    :host{position:absolute;left:1180px;top:701px;width:186px;height:27px}
    .w{position:absolute;left:18px;top:4px;width:165px;height:22px;background:#fff;display:flex;align-items:center;padding-left:16px;box-sizing:border-box;gap:6px;color:#1e78c8;font-weight:bold;font-size:15px}
    .s{position:absolute;left:2px;top:1px;width:25px;height:25px;background:#f0541e;border-radius:3px;transform:rotate(-8deg);color:#fff;font:bold 23px/25px "Liberation Sans";text-align:center}
  ` }
  html() { return `
    <div class="w"><span style="width:15px">中</span><span style="width:17px;font-size:12px;text-align:center">°,</span>${icon('micB')}${icon('keys')}${icon('user')}${icon('shirt')}${icon('wrench')}</div>
    <div class="s">S</div>` }
}

const defs = {
  'ui-icon': UiIcon, 'tool-btn': ToolBtn, 'bar-sep': BarSep, 'title-bar': TitleBar, 'menu-bar': MenuBar,
  'main-toolbar': MainToolbar, 'work-area': WorkArea, 'panel-btn': PanelBtn, 'tree-node': TreeNode,
  'nav-panel': NavPanel, 'comp-panel': CompPanel, 'draw-area': DrawArea, 'status-bar': StatusBar,
  'task-bar': TaskBar, 'section-dialog': SectionDialog, 'cad-canvas': CadCanvas, 'net-widget': NetWidget, 'ime-bar': ImeBar
}
Object.entries(defs).forEach(([k, v]) => customElements.define(k, v))
</script>
</body>
</html>
